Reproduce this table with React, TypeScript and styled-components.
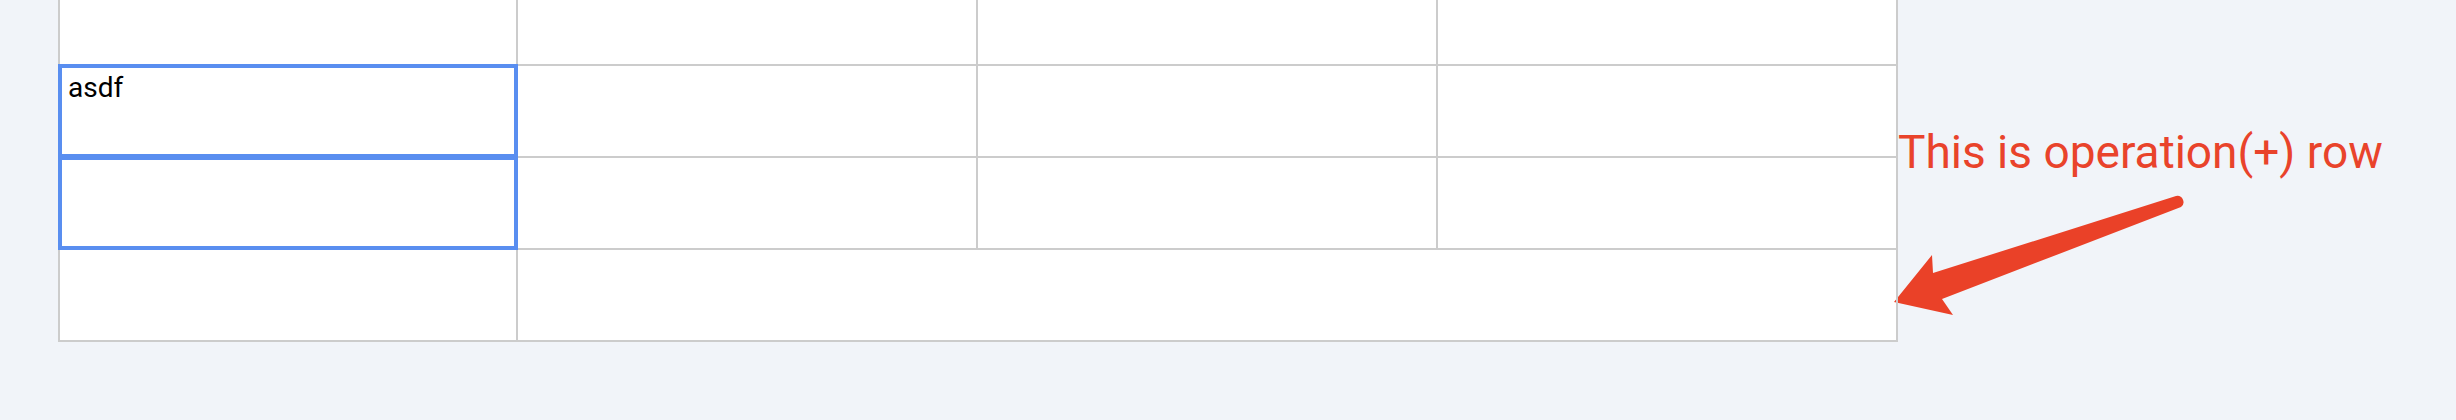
import React from 'react';
import styled, { createGlobalStyle, css } from 'styled-components';

const GlobalStyle = createGlobalStyle`
  html, body {
    margin: 0;
    padding: 0;
    background: #f1f4f9;
  }
  body {
    font-family: Roboto, "Liberation Sans", sans-serif;
    overflow: hidden;
  }
`;

const Page = styled.div`
  display: flex;
  align-items: flex-start;
  padding-left: 58px;
  height: 420px;
  overflow: hidden;
`;

const Sheet = styled.div`
  display: grid;
  grid-template-columns: 458px 460px 460px 460px;
  grid-auto-rows: 92px;
  margin-top: -28px;
  border-left: 2px solid #cccccc;
  border-top: 2px solid #cccccc;
  background: #ffffff;
`;

const Cell = styled.div<{ $span?: number; $selected?: boolean }>`
  position: relative;
  box-sizing: border-box;
  grid-column: span ${p => p.$span ?? 1};
  border-right: 2px solid #cccccc;
  border-bottom: 2px solid #cccccc;
  padding: 5px 8px;
  font-size: 28px;
  line-height: normal;
  color: #000000;
  ${p => p.$selected && css`
    &::after {
      content: '';
      position: absolute;
      top: -2px;
      left: -2px;
      right: -2px;
      bottom: -2px;
      border: 4px solid #598ef0;
      pointer-events: none;
    }
  `}
`;

const Annotation = styled.div`
  display: flex;
  flex-direction: column;
  align-items: flex-start;
  padding-top: 125px;
`;

const Note = styled.div`
  font-family: Roboto, "Liberation Sans", sans-serif;
  font-size: 46px;
  line-height: 54px;
  color: #e9432b;
  white-space: nowrap;
`;

const Arrow = styled.svg`
  display: block;
  margin-top: 11px;
  margin-left: -8px;
  overflow: visible;
`;

type Row = { text?: string; span?: number; selected?: boolean }[];

const rows: Row[] = [
  [{}, {}, {}, {}],
  [{ text: 'asdf', selected: true }, {}, {}, {}],
  [{ selected: true }, {}, {}, {}],
  [{}, { span: 3 }],
];

export default function App() {
  return (
    <>
      <GlobalStyle />
      <Page>
        <Sheet>
          {rows.map((row, r) =>
            row.map((c, i) => (
              <Cell key={`${r}-${i}`} $span={c.span} $selected={c.selected}>
                {c.text}
              </Cell>
            ))
          )}
        </Sheet>
        <Annotation>
          <Note>This is operation(+) row</Note>
          <Arrow width="300" height="130" viewBox="0 0 300 130">
            <path
              d="M 4 112 L 42 65 L 43 83 L 286 6 A 6.2 6.2 0 0 1 291 17 L 52 109 L 63 125 Z"
              fill="#ea4128"
            />
          </Arrow>
        </Annotation>
      </Page>
    </>
  );
}
